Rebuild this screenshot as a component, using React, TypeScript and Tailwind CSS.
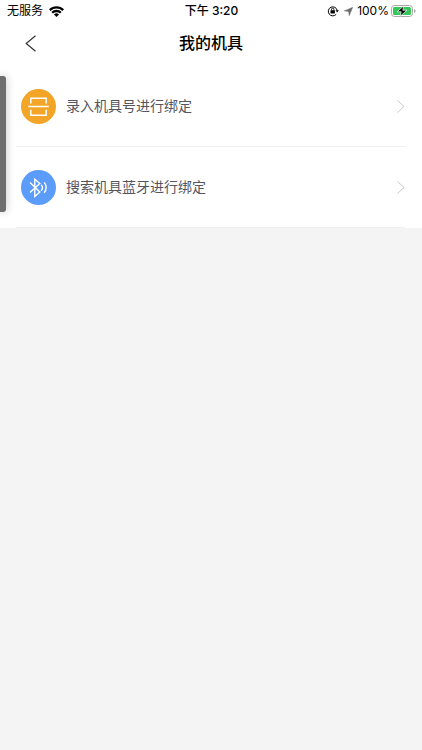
import type { ReactNode } from "react";

function StatusBar() {
  return (
    <div className="grid h-[22px] grid-cols-3 items-center pr-[6px] pl-[7px] text-[12px] leading-[22px] text-black">
      <div className="flex items-center gap-[6px]">
        <span>无服务</span>
        <svg aria-hidden="true" width="15" height="11" viewBox="0 0 15 11" fill="none" stroke="#000" strokeWidth="2.3">
          <path d="M0.8 4.1a9.4 9.4 0 0 1 13.4 0" />
          <path d="M3.2 6.8a6 6 0 0 1 8.6 0" />
          <path d="M7.5 11 5 8.5a3.5 3.5 0 0 1 5 0Z" fill="#000" stroke="none" />
        </svg>
      </div>
      <div className="text-center font-medium whitespace-nowrap">下午 3:20</div>
      <div className="flex items-center justify-end whitespace-nowrap">
        <svg aria-hidden="true" className="mr-[5px] shrink-0" width="12" height="12" viewBox="0 0 12 12" fill="none" stroke="#000" strokeWidth="1">
          <path d="M9.2 9.3A4.5 4.5 0 1 1 10.2 5.4" />
          <path d="M8.5 5.2h3.3L10.2 7.4Z" fill="#000" stroke="none" />
          <rect x="3.5" y="5.2" width="4.4" height="3.3" rx="0.4" fill="#000" stroke="none" />
          <path d="M4.5 5.5V4.4a1.2 1.2 0 0 1 2.4 0v1.1" strokeWidth="0.9" />
        </svg>
        <svg aria-hidden="true" className="mr-[4px] shrink-0" width="9" height="9" viewBox="0 0 9 9">
          <path d="M8.8 0.2 5.2 8.8 4.6 4.4 0.2 3.9Z" fill="#6b6b6b" stroke="#6b6b6b" strokeWidth="0.4" />
        </svg>
        <span>100%</span>
        <svg aria-hidden="true" className="ml-[2px] shrink-0" width="25" height="12" viewBox="0 0 25 12">
          <rect x="0.5" y="0.5" width="21" height="11" rx="3" fill="#fff" stroke="#a8a8a8" />
          <rect x="2" y="2" width="18" height="8" rx="1.5" fill="#35c759" />
          <path d="M23 4v4c1-.3 1.5-1 1.5-2S24 4.3 23 4Z" fill="#a8a8a8" />
          <path d="M12.800 0.800 6 6.800h4.200L9.200 11.200l6.800-6h-4.200Z" fill="#000" stroke="#fff" strokeWidth="0.700" />
        </svg>
      </div>
    </div>
  );
}

function ScanIcon() {
  return (
    <svg aria-hidden="true" width="35" height="35" viewBox="0 0 35 35" fill="none" stroke="#fff" strokeWidth="1.500">
      <circle cx="17.500" cy="17.500" r="17.500" fill="#f2a526" stroke="none" />
      <path d="M9.800 14.500V9.300h15.400v5.200M9.800 20.700v5.600h15.400v-5.600M7.200 17.600h20.600" />
    </svg>
  );
}

function BluetoothIcon() {
  return (
    <svg aria-hidden="true" width="35" height="35" viewBox="0 0 35 35" fill="none" stroke="#fff" strokeWidth="1.400">
      <circle cx="17.500" cy="17.500" r="17.500" fill="#5b9cfa" stroke="none" />
      <path d="m9 12.600 9.800 9.400-5 4.500V9.200l5 4.300L9 22.400" />
      <path d="M20.200 14.700a4.600 4.600 0 0 1 0 6M23.200 12.400a8 8 0 0 1 0 10.400" />
    </svg>
  );
}

function BindingRow({ icon, label }: { icon: ReactNode; label: string }) {
  return (
    <li className="pr-[17px] pl-[16px]">
      <button type="button" className="flex h-[81px] w-full items-center border-b border-[#efefef] pl-[5px] text-left">
        {icon}
        <span className="ml-[10px] flex-1 text-[14px] leading-5 text-[#55555f]">{label}</span>
        <svg aria-hidden="true" width="8" height="13" viewBox="0 0 8 13" fill="none" stroke="#c8c8c8" strokeWidth="1">
          <path d="m0.500 0.500 6.500 6-6.500 6" />
        </svg>
      </button>
    </li>
  );
}

export default function App() {
  return (
    <div className="relative min-h-screen bg-[#f4f4f4] font-['Inter','Noto_Sans_CJK_SC',sans-serif]">
      <div className="bg-white">
        <StatusBar />
        <header className="grid grid-cols-[60px_1fr_60px] items-center pb-[2px]">
          <button type="button" aria-label="返回" className="flex h-[42px] items-center pl-[25px]">
            <svg aria-hidden="true" width="12" height="17" viewBox="0 0 12 17" fill="none" stroke="#333" strokeWidth="1.200">
              <path d="M10.500 0.800 1.200 8.500l9.300 7.700" />
            </svg>
          </button>
          <h1 className="text-center text-[16px] leading-6 font-medium text-black">我的机具</h1>
        </header>
        <ul>
          <BindingRow icon={<ScanIcon />} label="录入机具号进行绑定" />
          <BindingRow icon={<BluetoothIcon />} label="搜索机具蓝牙进行绑定" />
        </ul>
      </div>
      <div className="absolute top-[76px] left-0 h-[136px] w-[6px] rounded-r-[3px] bg-[#6e6e6e] shadow-[0_0_8px_rgba(0,0,0,0.25)]" />
    </div>
  );
}
